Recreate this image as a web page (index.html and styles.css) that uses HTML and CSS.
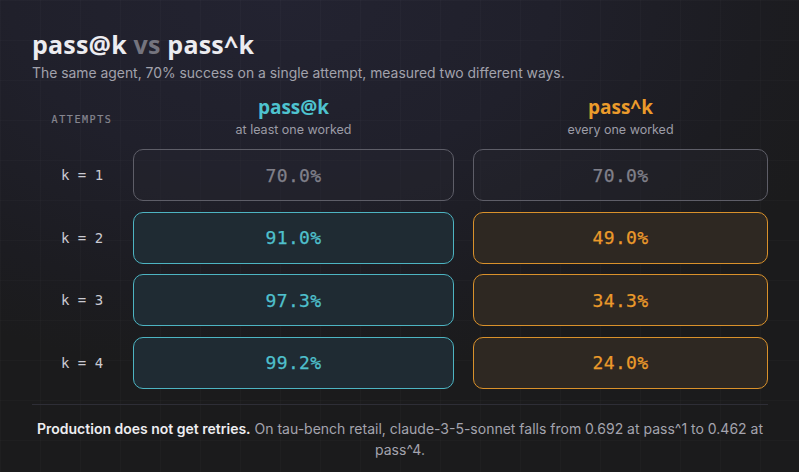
FILE: index.html
```html
<!DOCTYPE html>
<html lang="en">
<head>
<meta charset="utf-8">
<title>pass@k vs pass^k</title>
<link rel="stylesheet" href="styles.css">
</head>
<body>
<main class="page">
  <header class="intro">
    <h1 class="title">pass@k <span class="vs">vs</span> pass^k</h1>
    <p class="subtitle">The same agent, 70% success on a single attempt, measured two different ways.</p>
  </header>

  <section class="table">
    <div class="label label-head">ATTEMPTS</div>
    <div class="col-head">
      <div class="col-name at">pass@k</div>
      <div class="col-desc">at least one worked</div>
    </div>
    <div class="col-head">
      <div class="col-name caret">pass^k</div>
      <div class="col-desc">every one worked</div>
    </div>

    <div class="label">k = 1</div>
    <div class="cell neutral">70.0%</div>
    <div class="cell neutral">70.0%</div>

    <div class="label">k = 2</div>
    <div class="cell cyan">91.0%</div>
    <div class="cell orange">49.0%</div>

    <div class="label">k = 3</div>
    <div class="cell cyan">97.3%</div>
    <div class="cell orange">34.3%</div>

    <div class="label">k = 4</div>
    <div class="cell cyan">99.2%</div>
    <div class="cell orange">24.0%</div>
  </section>

  <footer class="note">
    <p><strong>Production does not get retries.</strong> On tau-bench retail, claude-3-5-sonnet falls from 0.692 at pass^1 to 0.462 at pass^4.</p>
  </footer>
</main>
</body>
</html>
```

FILE: styles.css
```css
html, body {
  margin: 0;
  padding: 0;
}

body {
  width: 799px;
  height: 472px;
  overflow: hidden;
  background-color: #1b1b1d;
  background-image:
    linear-gradient(rgba(255,255,255,0.018) 1px, transparent 1px),
    linear-gradient(90deg, rgba(255,255,255,0.018) 1px, transparent 1px),
    radial-gradient(ellipse 75% 80% at 35% 0%, #232331 0%, #20202b 45%, #1c1c21 80%, #1b1b1c 100%);
  background-size: 40px 40px, 40px 40px, 100% 100%;
  font-family: "Inter", "Noto Sans", sans-serif;
  color: #e6e6ea;
}

.page {
  padding: 29px 31px 0 32px;
}

.title {
  margin: 0;
  font-family: "Open Sans", "Lato", sans-serif;
  font-weight: 700;
  font-size: 25px;
  line-height: 30px;
  color: #ececf0;
  letter-spacing: 0.2px;
}

.title .vs {
  color: #74747e;
}

.subtitle {
  margin: 4px 0 0;
  font-size: 13.9px;
  line-height: 20px;
  color: #a2a2ac;
}

.table {
  margin-top: 13px;
  display: grid;
  grid-template-columns: 82px 321px 295px;
  column-gap: 19px;
  row-gap: 10.5px;
  align-items: center;
}

.col-head {
  text-align: center;
  margin-bottom: 1.5px;
}

.col-name {
  font-family: "Open Sans", "Lato", sans-serif;
  font-weight: 700;
  font-size: 19px;
  line-height: 22px;
}

.col-name.at { color: #4ec3cf; }
.col-name.caret { color: #eb9b2b; }

.col-desc {
  margin-top: 4px;
  font-size: 12.5px;
  line-height: 15px;
  color: #9c9ca6;
}

.label {
  padding-left: 18px;
  text-align: center;
  font-family: "DejaVu Sans Mono", "Liberation Mono", monospace;
  font-size: 14px;
  color: #cacad2;
}

.label-head {
  font-size: 10px;
  font-weight: 400;
  letter-spacing: 1.6px;
  color: #868690;
  padding-top: 4px;
  -webkit-text-stroke: 0.2px currentColor;
}

.cell {
  height: 50px;
  box-sizing: content-box;
  border-radius: 10px;
  border: 1.5px solid;
  display: flex;
  align-items: center;
  justify-content: center;
  font-family: "DejaVu Sans Mono", "Liberation Mono", monospace;
  font-size: 18px;
  letter-spacing: 0.4px;
  -webkit-text-stroke: 0.25px currentColor;
}

.cell.neutral {
  border-color: #5e5e68;
  background: rgba(40, 40, 48, 0.35);
  color: #80808a;
}

.cell.cyan {
  border-color: #4db4c2;
  background: #1f2b33;
  color: #4fc0cd;
}

.cell.orange {
  border-color: #d9912b;
  background: #2e2822;
  color: #eb9a2b;
}

.note {
  margin-top: 15px;
  border-top: 1px solid #2e2e36;
  padding-top: 13px;
  text-align: center;
}

.note p {
  margin: 0;
  font-size: 14px;
  line-height: 21px;
  color: #a4a4ae;
}

.note strong {
  font-weight: 600;
  color: #ededf0;
}
```
